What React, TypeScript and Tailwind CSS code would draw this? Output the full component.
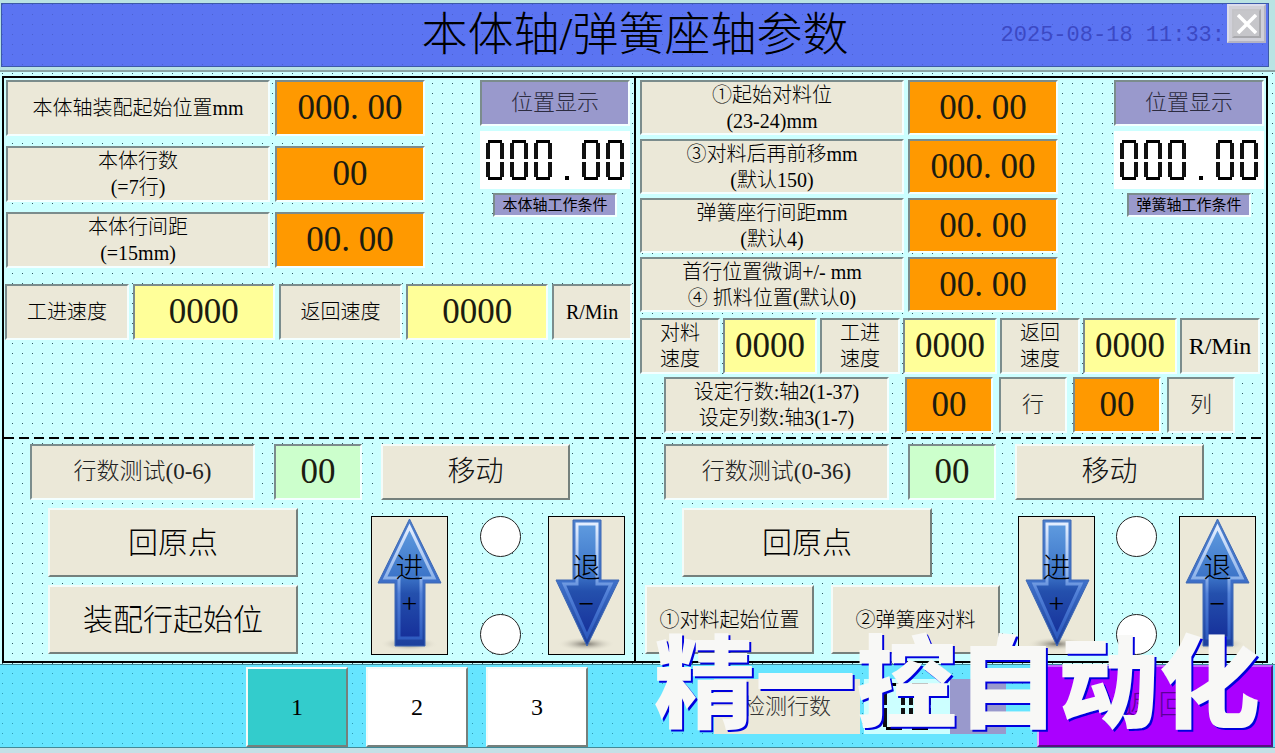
import React, { useState } from 'react';
import clsx from 'clsx';

const sunken = 'border-2 border-t-[#7b8c8c] border-l-[#7b8c8c] border-b-[#f4ffff] border-r-[#f4ffff]';
const raised = 'border-2 border-t-[#f4fbf8] border-l-[#f4fbf8] border-b-[#75807c] border-r-[#75807c]';

const LabelBox = ({ lines, htmlFor, className }: { lines: string[]; htmlFor?: string; className?: string }) => (
  <label
    htmlFor={htmlFor}
    className={clsx(sunken, 'flex flex-col items-center justify-center bg-[#ebe8d8] whitespace-nowrap', className)}
  >
    {lines.map(line => (
      <span key={line}>{line}</span>
    ))}
  </label>
);

const NumberBox = ({ id, value, label, className }: { id: string; value: string; label?: string; className: string }) => {
  const [text, setText] = useState(value);
  return (
    <input
      id={id}
      type="text"
      aria-label={label}
      value={text}
      onChange={(e) => setText(e.target.value)}
      className={clsx(sunken, 'w-full min-w-0 text-center text-[35px] leading-none text-[#1c1c10] focus:outline-none', className)}
    />
  );
};

const orange = 'bg-[#ff9900]';
const yellow = 'bg-[#ffff99]';
const green = 'bg-[#ccffcc]';

// one seven segment zero
const Zero = ({ className }: { className: string }) => (
  <span className={clsx('flex flex-col items-center', className)}>
    <span className="h-[3px] w-3/4 bg-black" />
    <span className="w-full flex-1 border-x-4 border-[#111]" />
    <span className="mt-[3px] w-full flex-1 border-x-4 border-[#111]" />
    <span className="h-[3px] w-3/4 bg-black" />
  </span>
);

const Readout = ({ value }: { value: string }) => (
  <div role="img" aria-label={value} className="flex h-[58px] w-full items-center justify-center gap-[6px] bg-white">
    {value.split('').map((c, i) =>
      c === '.' ? (
        <span key={i} className="flex h-10 w-[18px] items-end justify-center">
          <span className="size-1 bg-black" />
        </span>
      ) : (
        <Zero key={i} className="h-10 w-[18px]" />
      )
    )}
  </div>
);

const PositionDisplay = ({ condition }: { condition: string }) => (
  <div className="flex flex-col items-center">
    <div className={clsx(sunken, 'flex h-[46px] w-full items-center justify-center bg-[#9999cc] text-[22px] text-[#2c2c40]')}>
      位置显示
    </div>
    <div className="mt-[5px] w-full">
      <Readout value="000.00" />
    </div>
    <div className={clsx(sunken, 'mt-1 flex h-6 w-[124px] items-center justify-center bg-[#9999cc] text-[15px] font-normal whitespace-nowrap')}>
      {condition}
    </div>
  </div>
);

const PushButton = ({ children, className }: { children: React.ReactNode; className?: string }) => (
  <button type="button" className={clsx(raised, 'bg-[#ebe8d8] whitespace-nowrap', className)}>
    {children}
  </button>
);

const Lamp = () => <span className="size-[41px] rounded-full border border-[#222] bg-white" />;

const ArrowButton = ({ id, dir, text, sign }: { id: string; dir: 'up' | 'down'; text: string; sign: string }) => {
  const up = dir === 'up';
  const shape = up
    ? 'M37.5 2 L69 66 H53 V129 H23 V66 H6 Z'
    : 'M24 3 H52 V63 H70 L38 129 L7 63 H24 Z';
  const inner = up
    ? 'M37.5 10 L62 61 H49 V121 H27 V61 H13 Z'
    : 'M28 7 H48 V67 H62 L38 119 L15 67 H28 Z';
  return (
    <button type="button" className="relative flex h-[139px] w-[77px] shrink-0 flex-col items-center justify-center border border-black bg-[#ebe8d8] text-[28px] leading-[35px]">
      <svg viewBox="0 0 75 137" className="absolute inset-0 size-full">
        <defs>
          <linearGradient id={`${id}-edge`} x1="0" y1="0" x2="0" y2="1">
            <stop offset="0" stopColor="#4d80cc" />
            <stop offset="0.5" stopColor="#3d6fc8" />
            <stop offset="1" stopColor="#1c3f9c" />
          </linearGradient>
          <linearGradient id={`${id}-rim`} x1="0" y1="0" x2="0" y2="1">
            <stop offset="0" stopColor="#e4eeff" />
            <stop offset="0.45" stopColor="#8fb4ea" />
            <stop offset="0.6" stopColor="#5382d8" />
            <stop offset="1" stopColor="#2f5cc0" />
          </linearGradient>
          <linearGradient id={`${id}-fill`} x1="0" y1="0" x2="0" y2="1">
            <stop offset="0" stopColor="#5f9bdf" />
            <stop offset="0.45" stopColor="#3c74c8" />
            <stop offset="0.6" stopColor="#2450ad" />
            <stop offset="1" stopColor="#16309a" />
          </linearGradient>
          <radialGradient id={`${id}-shadow`}>
            <stop offset="0" stopColor="#77736a" />
            <stop offset="1" stopColor="#ebe8d8" stopOpacity="0" />
          </radialGradient>
        </defs>
        <ellipse cx="37" cy="127" rx="29" ry="7" fill={`url(#${id}-shadow)`} />
        <path d={shape} fill={`url(#${id}-edge)`} stroke="#3f69b4" strokeWidth="1" />
        <path d={inner} fill={`url(#${id}-fill)`} stroke={`url(#${id}-rim)`} strokeWidth="3" />
      </svg>
      <span className="relative">{text}</span>
      <span className="relative">{sign}</span>
    </button>
  );
};

const DashLine = () => (
  <div className="h-[2px] shrink-0 bg-[repeating-linear-gradient(90deg,#000_0_10px,transparent_10px_15px)]" />
);

const bodyRows = [
  { id: 'body-start', lines: ['本体轴装配起始位置mm'], value: '000. 00' },
  { id: 'body-rows', lines: ['本体行数', '(=7行)'], value: '00' },
  { id: 'body-pitch', lines: ['本体行间距', '(=15mm)'], value: '00. 00' },
];

const springRows = [
  { id: 'spring-start', lines: ['①起始对料位', '(23-24)mm'], value: '00. 00' },
  { id: 'spring-forward', lines: ['③对料后再前移mm', '(默认150)'], value: '000. 00' },
  { id: 'spring-pitch', lines: ['弹簧座行间距mm', '(默认4)'], value: '00. 00' },
  { id: 'spring-trim', lines: ['首行位置微调+/- mm', '④ 抓料位置(默认0)'], value: '00. 00' },
];

const springSpeeds = [
  { id: 'feed-speed', lines: ['对料', '速度'] },
  { id: 'work-speed', lines: ['工进', '速度'] },
  { id: 'back-speed', lines: ['返回', '速度'] },
];

const TestRow = ({ id, label, className }: { id: string; label: string; className: string }) => (
  <div className={clsx('grid h-14 grid-cols-[225fr_88fr_189fr] gap-[19px]', className)}>
    <LabelBox htmlFor={id} lines={[label]} className="text-[23px] text-[#222]" />
    <NumberBox id={id} value="00" className={green} />
    <PushButton className="text-[28px] text-[#111]">移动</PushButton>
  </div>
);

const BodyPanel = () => (
  <section className="flex flex-col border-r-2 border-black">
    <div className="flex-1 pt-[2px]">
      <div className="grid grid-cols-[419fr_150fr] gap-[55px] pr-1 pl-[2px]">
        <div className="grid auto-rows-[56px] grid-cols-[264fr_150fr] gap-x-[5px] gap-y-[10px]">
          {bodyRows.map(r => (
            <React.Fragment key={r.id}>
              <LabelBox htmlFor={r.id} lines={r.lines} />
              <NumberBox id={r.id} value={r.value} className={orange} />
            </React.Fragment>
          ))}
        </div>
        <PositionDisplay condition="本体轴工作条件" />
      </div>
      <div className="mt-4 grid h-14 grid-cols-[124fr_142fr_124fr_142fr_80fr] gap-1 pr-[2px] pl-[1px]">
        <LabelBox htmlFor="body-work" lines={['工进速度']} />
        <NumberBox id="body-work" value="0000" className={yellow} />
        <LabelBox htmlFor="body-back" lines={['返回速度']} />
        <NumberBox id="body-back" value="0000" className={yellow} />
        <LabelBox lines={['R/Min']} />
      </div>
    </div>
    <DashLine />
    <TestRow id="body-test" label="行数测试(0-6)" className="mt-[5px] mr-[64px] ml-[26px]" />
    <div className="flex items-start justify-between pt-2 pr-[9px] pb-[6px] pl-[44px]">
      <div className="flex w-[250px] flex-col gap-2 text-[30px]">
        <PushButton className="h-[69px]">回原点</PushButton>
        <PushButton className="h-[69px]">装配行起始位</PushButton>
      </div>
      <div className="mt-2 flex">
        <ArrowButton id="body-fwd" dir="up" text="进" sign="+" />
        <div className="mr-[27px] ml-8 flex flex-col justify-between">
          <Lamp />
          <Lamp />
        </div>
        <ArrowButton id="body-rev" dir="down" text="退" sign="−" />
      </div>
    </div>
  </section>
);

const SpringPanel = () => (
  <section className="flex flex-col">
    <div className="flex-1 pt-[2px] pb-[5px]">
      <div className="grid grid-cols-[418fr_150fr] gap-[56px] pr-[2px] pl-1">
        <div className="grid auto-rows-[55px] grid-cols-[264fr_150fr] gap-x-1 gap-y-1">
          {springRows.map(r => (
            <React.Fragment key={r.id}>
              <LabelBox htmlFor={r.id} lines={r.lines} />
              <NumberBox id={r.id} value={r.value} className={orange} />
            </React.Fragment>
          ))}
        </div>
        <PositionDisplay condition="弹簧轴工作条件" />
      </div>
      <div className="mt-[6px] mr-[6px] ml-1 grid h-[55px] grid-cols-[80fr_94fr_80fr_94fr_80fr_94fr_80fr] gap-[3px]">
        {springSpeeds.map(s => (
          <React.Fragment key={s.id}>
            <LabelBox htmlFor={s.id} lines={s.lines} />
            <NumberBox id={s.id} value="0000" className={yellow} />
          </React.Fragment>
        ))}
        <LabelBox lines={['R/Min']} className="text-2xl" />
      </div>
      <div className="mt-1 mr-[31px] ml-7 grid h-[55px] grid-cols-[235fr_88fr_68fr_88fr_68fr] gap-[6px]">
        <LabelBox htmlFor="set-rows" lines={['设定行数:轴2(1-37)', '设定列数:轴3(1-7)']} className="mr-[10px]" />
        <NumberBox id="set-rows" value="00" className={orange} />
        <LabelBox htmlFor="set-rows" lines={['行']} className="text-[22px] text-[#222]" />
        <NumberBox id="set-cols" value="00" className={orange} />
        <LabelBox htmlFor="set-cols" lines={['列']} className="text-[22px] text-[#222]" />
      </div>
    </div>
    <DashLine />
    <TestRow id="spring-test" label="行数测试(0-36)" className="mt-[5px] mr-[62px] ml-7" />
    <div className="flex items-start justify-between pt-2 pr-[10px] pb-[6px] pl-[9px]">
      <div className="flex w-[355px] flex-col gap-2">
        <PushButton className="ml-[37px] h-[69px] w-[250px] text-[30px]">回原点</PushButton>
        <div className="grid h-[69px] grid-cols-2 gap-[17px]">
          <PushButton>①对料起始位置</PushButton>
          <PushButton>②弹簧座对料</PushButton>
        </div>
      </div>
      <div className="mt-2 flex">
        <ArrowButton id="spring-fwd" dir="down" text="进" sign="+" />
        <div className="mr-[22px] ml-[21px] flex flex-col justify-between">
          <Lamp />
          <Lamp />
        </div>
        <ArrowButton id="spring-rev" dir="up" text="退" sign="−" />
      </div>
    </div>
  </section>
);

export default function App() {
  const [page, setPage] = useState(1);

  return (
    <div className={clsx(
      'relative min-h-screen bg-[#ccffff] bg-[conic-gradient(at_1px_1px,transparent_75%,#2c5a62_0)] bg-[length:10px_10px] bg-[position:2px_3px]',
      'font-["Liberation_Serif","Noto_Sans_CJK_SC",serif] text-[20px] leading-[26px] font-light text-black'
    )}>
      <header className="border-b-2 border-[#8aa5a5] bg-[#b9e3e3] pt-[3px] pr-[6px] pb-[3px] pl-[1px]">
        <div className="relative flex h-16 items-center justify-center border border-[#3c5aa8] bg-[#5b74f2] bg-[conic-gradient(at_1px_1px,transparent_75%,#4a5fd0_0)] bg-[length:10px_10px]">
          <h1 className="text-[46px] leading-none">本体轴/弹簧座轴参数</h1>
          <time className="absolute top-[19px] right-[43px] font-['Liberation_Mono',monospace] text-[22px] text-[#3c49c4]">
            2025-08-18 11:33:
          </time>
          <button
            type="button"
            aria-label="关闭"
            className="absolute top-0 right-[2px] flex size-[39px] items-center justify-center border-2 border-t-[#dcdcec] border-r-[#b4b4c4] border-b-[#b4b4c4] border-l-[#dcdcec] bg-[#d0d0d8]"
          >
            <span className="flex size-[29px] items-center justify-center border-2 border-[#c4c4c8] border-r-[#a8a8ac] border-b-[#a8a8ac] bg-[#c6c6ca]">
              <svg viewBox="0 0 20 20" className="size-5">
                <path d="M1 1 L19 19 M19 1 L1 19" stroke="#fff" strokeWidth="3.5" fill="none" />
              </svg>
            </span>
          </button>
        </div>
      </header>

      <main className="mt-1 mr-[7px] mb-[1px] ml-[2px] grid grid-cols-[632fr_630fr] border-2 border-black">
        <BodyPanel />
        <SpringPanel />
      </main>

      <footer className="relative flex h-[84px] items-start border-y border-[#3f8a98] bg-[#66e5ff] bg-[conic-gradient(at_1px_1px,transparent_75%,#2f9db4_0)] bg-[length:10px_10px] bg-[position:2px_8px] pl-[246px]">
        <nav className="mt-[2px] flex gap-[18px]">
          {[1, 2, 3].map(n => (
            <button
              key={n}
              type="button"
              onClick={() => setPage(n)}
              className={clsx(raised, 'h-20 w-[102px] text-2xl', page === n ? 'bg-[#33cccc]' : 'bg-white')}
            >
              {n}
            </button>
          ))}
        </nav>
        <div className="mt-[14px] mr-[31px] ml-auto flex h-[55px]">
          <div className="flex w-[146px] items-center justify-center bg-[#ebe8d8] text-[22px] text-[#333]">检测行数</div>
          <div role="img" aria-label="00" className="ml-1 flex w-[86px] items-center justify-center gap-1 bg-[#ccffff]">
            <Zero className="h-[47px] w-[22px]" />
            <Zero className="h-[47px] w-[22px]" />
          </div>
          <div className="w-[56px] bg-[#9999cc]" />
        </div>
        <button
          type="button"
          className="mr-[2px] h-[82px] w-[236px] border-2 border-t-[#c060ff] border-r-[#5a1080] border-b-[#5a1080] border-l-[#e0b0ff] bg-[#aa00ff] text-[28px] text-[#5c0099]"
        >
          返 回
        </button>
      </footer>
      <div className="h-[5px] bg-[#c4e0e6]" />

      <div className="pointer-events-none absolute right-[15px] bottom-4 text-[101px] leading-[101px] font-black whitespace-nowrap text-[#f8f8f6] [text-shadow:2px_2px_0_#0000dd]">
        精一控自动化
      </div>
    </div>
  );
}
